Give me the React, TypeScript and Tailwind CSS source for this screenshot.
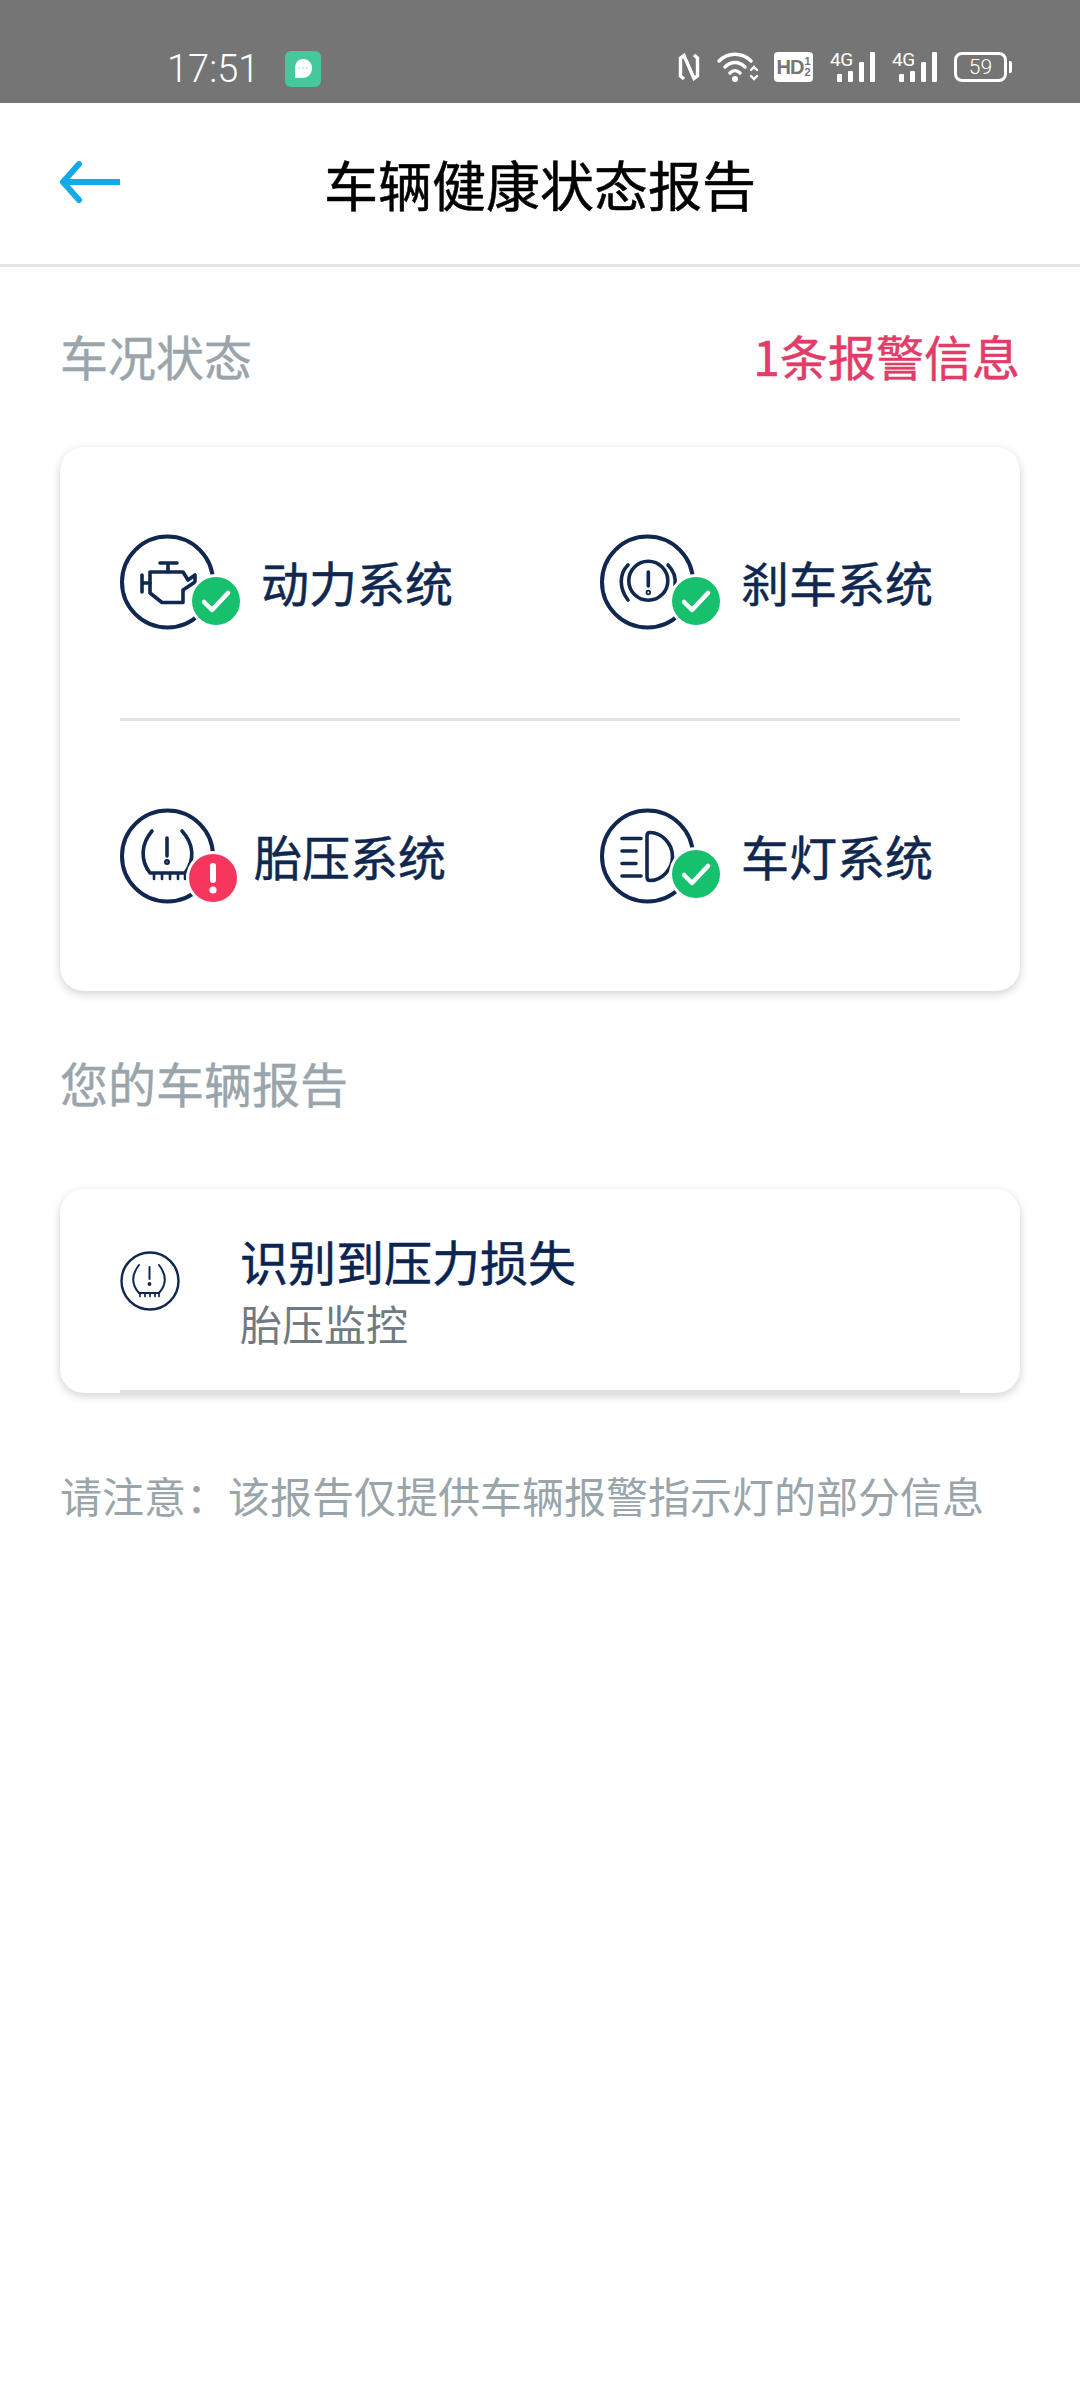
const NAVY = '#10284f';

function Badge({ cx, cy, kind }: { cx: number; cy: number; kind: 'ok' | 'alert' }) {
  return (
    <g>
      <circle cx={cx} cy={cy} r={27} fill="#fff" />
      <circle cx={cx} cy={cy} r={24} fill={kind === 'ok' ? '#17c06c' : '#f6365d'} />
      {kind === 'ok' ? (
        <path
          d={`M${cx - 12} ${cy + 1}L${cx - 4} ${cy + 9}L${cx + 12} ${cy - 8}`}
          fill="none"
          stroke="#fff"
          strokeWidth={4.5}
          strokeLinecap="round"
          strokeLinejoin="round"
        />
      ) : (
        <g fill="#fff">
          <rect x={cx - 3} y={cy - 15} width={6} height={20} rx={3} />
          <circle cx={cx} cy={cy + 12} r={3.6} />
        </g>
      )}
    </g>
  );
}

function Ring({ children, badge }: { children: React.ReactNode; badge: React.ReactNode }) {
  return (
    <svg width="120" height="100" viewBox="0 0 120 100" className="shrink-0">
      <circle cx="47.5" cy="50" r="45.5" fill="none" stroke={NAVY} strokeWidth="4" />
      <g fill="none" stroke={NAVY} strokeWidth="3.6" strokeLinecap="round" strokeLinejoin="round">
        {children}
      </g>
      {badge}
    </svg>
  );
}

function EngineIcon() {
  return (
    <Ring badge={<Badge cx={96} cy={69} kind="ok" />}>
      <path d="M40 31H57M48 31V40M22 43V60M22 51H30" />
      <path d="M30 40H63L68 48L75 43V50L63 58V70.5H42L30 61Z" />
    </Ring>
  );
}

function BrakeIcon() {
  return (
    <Ring badge={<Badge cx={96} cy={69} kind="ok" />}>
      <circle cx="48.3" cy="48.7" r="19.5" />
      <path d="M28 33C19 42 19 56 28 68M68 33C74 39 76 45 75 53" />
      <path d="M48.3 40V54" />
      <circle cx="48.3" cy="60.5" r="0.9" />
    </Ring>
  );
}

function TireIcon() {
  return (
    <Ring badge={<Badge cx={93} cy={72} kind="alert" />}>
      <path d="M32 25C21 38 20 54 30 67H65C75 54 74 38 62 25" />
      <path d="M34 67V73M42 67V73M50 67V73M58 67V73M65 67V73" strokeWidth="2.6" />
      <path d="M47 32V50" />
      <circle cx="47" cy="56" r="1.2" />
    </Ring>
  );
}

function LightIcon() {
  return (
    <Ring badge={<Badge cx={96} cy={68} kind="ok" />}>
      <path d="M22 32.5H41M22 45H36M22 57.5H36M22 70H41" />
      <path d="M50 26.5C62 26.5 72.5 38 72.5 50.5C72.5 63 62 74.5 50 74.5C47.5 74.5 47 73 47 71V30C47 28 47.5 26.5 50 26.5Z" />
    </Ring>
  );
}

function SmallTireIcon() {
  return (
    <svg width="60" height="60" viewBox="0 0 60 60" className="shrink-0 mb-[18px]">
      <circle cx="30" cy="30" r="28.5" fill="none" stroke={NAVY} strokeWidth="2.4" />
      <g fill="none" stroke={NAVY} strokeWidth="2" strokeLinecap="round">
        <path d="M19 14C12 23 11 33 19 42H39C47 33 46 23 39 14" />
        <path d="M20 42V45.500M25 42V45.500M30 42V45.500M35 42V45.500M39 42V45.500" strokeWidth="1.7" />
        <path d="M29.500 16V28" />
        <circle cx="29.500" cy="33" r="0.9" />
      </g>
    </svg>
  );
}

function Signal() {
  return (
    <div className="relative flex items-end gap-[6px] h-[30px] w-[45px] pl-[7px]">
      <span className="absolute left-0 top-[-1px] text-[19px] leading-[18px] tracking-[-0.5px] font-['Roboto',sans-serif]">4G</span>
      <div className="w-[5px] h-[8px] bg-white rounded-[1px]" />
      <div className="w-[5px] h-[11px] bg-white rounded-[1px]" />
      <div className="w-[5px] h-[20px] bg-white rounded-[1px]" />
      <div className="w-[5px] h-[30px] bg-white rounded-[1px]" />
    </div>
  );
}

function StatusBar() {
  return (
    <div className="h-[103px] bg-[#757575] flex items-start pt-[51px] pl-[167px] pr-[68px] text-white">
      <span className="text-[38px] leading-[36px] font-light font-['Roboto',sans-serif]">17:51</span>
      <div className="ml-[26px] w-[36px] h-[36px] rounded-[6px] bg-[#45c99b] flex items-center justify-center">
        <svg width="22" height="24" viewBox="0 0 22 24">
          <path d="M11 2C16.5 2 20 6 20 11C20 17 16 21 10 21H3V11C3 6 6 2 11 2Z" fill="#fff" />
          <g fill="#bfe9da">
            <circle cx="7" cy="11" r="1" />
            <circle cx="11" cy="11" r="1" />
            <circle cx="15" cy="11" r="1" />
          </g>
        </svg>
      </div>
      <div className="ml-auto flex items-center gap-[17px] h-[32px]">
        {/* NFC */}
        <svg width="22" height="28" viewBox="0 0 22 28" fill="none" stroke="#fff" strokeWidth="3.4">
          <path d="M6 26L2.500 23V5L6 2.500L16 25.500L19.500 23V5L16 2" />
        </svg>
        {/* wifi */}
        <svg width="42" height="30" viewBox="0 0 42 30" fill="none" stroke="#fff" strokeWidth="3.4" strokeLinecap="round">
          <path d="M2 9C11 0 25 0 34 9M8 15C14 9 22 9 28 15M13 21C16 18 20 18 23 21" />
          <circle cx="18" cy="27" r="3" fill="#fff" stroke="none" />
          <path d="M34 18L37 15L40 18M34 24L37 27L40 24" strokeWidth="2.4" />
        </svg>
        <div className="-ml-[2px] w-[39px] h-[30px] rounded-[4px] bg-white flex items-center justify-center text-[#757575] text-[20px] font-bold leading-none tracking-[-1px] font-['Liberation_Sans',sans-serif]">
          HD<span className="flex flex-col text-[11px] leading-[11px] ml-[1px] tracking-normal"><span>1</span><span>2</span></span>
        </div>
        <Signal />
        <Signal />
        {/* battery */}
        <div className="flex items-center gap-[2px]">
          <div className="w-[53px] h-[30px] rounded-[8px] border-[3px] border-white flex items-center justify-center text-[21px] font-light leading-none font-['Roboto',sans-serif]">
            59
          </div>
          <div className="w-[3px] h-[12px] rounded-r-[2px] bg-white" />
        </div>
      </div>
    </div>
  );
}

function Header() {
  return (
    <div className="h-[164px] border-b-[3px] border-[#e4e6e6] grid grid-cols-[1fr_auto_1fr] items-center">
      <svg width="62" height="42" viewBox="0 0 62 42" className="ml-[59px] -mt-[3px]" fill="none" stroke="#14a9e8" strokeWidth="6">
        <path d="M61 21H4" />
        <path d="M20 3L4 21L20 39" strokeLinecap="round" strokeLinejoin="round" />
      </svg>
      <h1 className="text-[54px] leading-[72px] text-black font-normal [-webkit-text-stroke:0.5px_#000]">车辆健康状态报告</h1>
      <div />
    </div>
  );
}

function SystemItem({ icon, label, gap }: { icon: React.ReactNode; label: string; gap: string }) {
  return (
    <div className="flex items-center h-[100px]">
      {icon}
      <span className={`text-[48px] leading-[64px] -mt-[3px] text-[#10284f] [-webkit-text-stroke:0.5px_#10284f] ${gap}`}>{label}</span>
    </div>
  );
}

export default function App() {
  return (
    <div className="w-[1080px] h-[2400px] bg-white font-['Noto_Sans_CJK_SC','Noto_Sans',sans-serif]">
      <StatusBar />
      <Header />

      <div className="px-[60px]">
        <div className="flex items-center justify-between h-[64px] mt-[56px] text-[48px]">
          <span className="text-[#9aa5ab] [-webkit-text-stroke:0.4px_#9aa5ab]">车况状态</span>
          <span className="text-[#e23d68] [-webkit-text-stroke:0.5px_#e23d68]">1条报警信息</span>
        </div>

        <div className="mt-[60px] h-[544px] rounded-[24px] bg-white shadow-[0_3px_10px_rgba(0,0,0,0.18)] px-[60px] pt-[85px]">
          <div className="grid grid-cols-[480px_1fr]">
            <SystemItem icon={<EngineIcon />} label="动力系统" gap="ml-[21px]" />
            <SystemItem icon={<BrakeIcon />} label="刹车系统" gap="ml-[21px]" />
          </div>
          <div className="h-[3px] bg-[#e2e4e5] mt-[86px] mb-[85px]" />
          <div className="grid grid-cols-[480px_1fr]">
            <SystemItem icon={<TireIcon />} label="胎压系统" gap="ml-[14px]" />
            <SystemItem icon={<LightIcon />} label="车灯系统" gap="ml-[21px]" />
          </div>
        </div>

        <div className="mt-[59px] h-[64px] text-[48px] leading-[64px] text-[#9aa5ab] [-webkit-text-stroke:0.4px_#9aa5ab]">您的车辆报告</div>

        <div className="mt-[75px] h-[204px] rounded-[24px] bg-white shadow-[0_3px_10px_rgba(0,0,0,0.18)] flex flex-col">
          <div className="flex-1 flex items-center pl-[60px]">
            <SmallTireIcon />
            <div className="ml-[60px] pt-[2px]">
              <div className="text-[48px] leading-[64px] text-[#0b2452] [-webkit-text-stroke:0.5px_#0b2452]">识别到压力损失</div>
              <div className="text-[42px] leading-[62px] text-[#6f7a82]">胎压监控</div>
            </div>
          </div>
          <div className="h-[3px] mx-[60px] bg-[#dfe1e2]" />
        </div>

        <p className="mt-[74px] text-[42px] leading-[56px] text-[#9aa5ab] whitespace-nowrap">
          请注意：该报告仅提供车辆报警指示灯的部分信息
        </p>
      </div>
    </div>
  );
}
